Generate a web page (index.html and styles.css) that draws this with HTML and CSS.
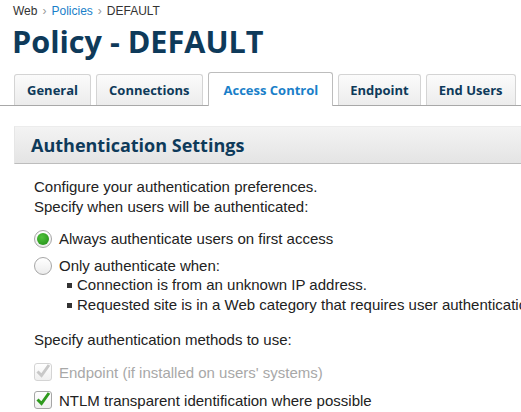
FILE: index.html
```html
<!DOCTYPE html>
<html>
<head>
<meta charset="utf-8">
<link rel="stylesheet" href="styles.css">
</head>
<body>
<div class="crumbs"><span>Web</span><span class="sep">›</span><a class="link">Policies</a><span class="sep">›</span><span>DEFAULT</span></div>
<h1 class="title">Policy - DEFAULT</h1>
<div class="tabs">
  <div class="tab">General</div>
  <div class="tab">Connections</div>
  <div class="tab active">Access Control</div>
  <div class="tab narrow">Endpoint</div>
  <div class="tab">End Users</div>
</div>
<div class="section-head">Authentication Settings</div>
<div class="content">
  <p class="intro">Configure your authentication preferences.<br>Specify when users will be authenticated:</p>
  <div class="opt first"><span class="radio on"></span><span>Always authenticate users on first access</span></div>
  <div class="opt"><span class="radio"></span><span>Only authenticate when:</span></div>
  <ul class="bullets">
    <li>Connection is from an unknown IP address.</li>
    <li>Requested site is in a Web category that requires user authentication.</li>
  </ul>
  <p class="methods">Specify authentication methods to use:</p>
  <div class="opt chk disabled"><span class="check dis"><svg viewBox="0 0 18 18" width="18" height="18"><path d="M3.5 9.5 L7.5 13.5 L15 3" fill="none" stroke="#c8c8c8" stroke-width="3"/></svg></span><span>Endpoint (if installed on users' systems)</span></div>
  <div class="opt chk"><span class="check"><svg viewBox="0 0 18 18" width="18" height="18"><path d="M3.5 9.5 L7.5 13.5 L15 3" fill="none" stroke="#2f9a1e" stroke-width="3"/></svg></span><span>NTLM transparent identification where possible</span></div>
</div>
</body>
</html>
```

FILE: styles.css
```css
html, body { margin: 0; padding: 0; background: #fff; overflow: hidden; }
body { width: 521px; height: 412px; font-family: "Liberation Sans", Arial, sans-serif; color: #222; }
.crumbs { padding: 4px 0 0 13px; font-size: 12px; color: #333; height: 14px; line-height: 14px; display: flex; gap: 5px; }
.crumbs .sep { color: #999; }
.crumbs .link { color: #1a7fc9; }
.title { margin: 5px 0 0 12px; font-family: "Open Sans", sans-serif; font-weight: 700; font-size: 30.6px; line-height: 36px; color: #0e3a5a; }
.tabs { margin-top: 14px; display: flex; gap: 5px; padding-left: 14px; border-bottom: 1px solid #a8a8a8; height: 32px; align-items: flex-end; white-space: nowrap; }
.tab { flex-shrink: 0; font-family: "Open Sans", sans-serif; font-weight: 700; font-size: 13px; color: #0e3a5a; height: 31px; line-height: 30px; padding: 0 12px; border: 1px solid #d4d4d4; border-bottom: none; border-radius: 3px 3px 0 0; background: linear-gradient(#fbfbfb, #ececec); box-sizing: border-box; }
.tab.narrow { padding: 0 11px; }
.tab.active { background: #fff; color: #1a7fc9; height: 34px; margin-bottom: -1px; border-color: #bdbdbd; line-height: 34px; padding: 0 14px 0 15px; }
.section-head { margin: 20px 0 0 14px; height: 38px; line-height: 37px; box-sizing: border-box; padding-left: 16px; background: linear-gradient(#f3f3f3, #e4e4e4); border-top: 1px solid #ececec; border-left: 1px solid #e6e6e6; border-bottom: 1px solid #bdbdbd; font-family: "Open Sans", sans-serif; font-weight: 700; font-size: 18px; color: #0e3a5a; }
.content { padding-left: 34px; font-size: 15px; color: #222; white-space: nowrap; }
.intro { margin: 13px 0 0; line-height: 20px; }
.opt { display: flex; align-items: center; gap: 7px; height: 27px; }
.opt.first { margin-top: 8px; }
.opt.chk { height: 28px; }
.radio { flex-shrink: 0; width: 18px; height: 18px; border-radius: 50%; box-sizing: border-box; border: 1px solid #a6a6a6; background: linear-gradient(#ffffff, #ececec); display: inline-block; position: relative; }
.radio.on::after { content: ""; position: absolute; left: 2px; top: 2px; width: 12px; height: 12px; border-radius: 50%; background: radial-gradient(circle at 40% 35%, #4fc23a, #1f8a16); }
.bullets { list-style: none; margin: -4px 0 0; padding: 0 0 0 33px; }
.bullets li { line-height: 20px; position: relative; padding-left: 10px; }
.bullets li::before { content: ""; position: absolute; left: 0; top: 8px; width: 5px; height: 5px; background: #333; }
.methods { margin: 15px 0 8px; line-height: 20px; }
.check { flex-shrink: 0; width: 18px; height: 18px; box-sizing: border-box; border: 1px solid #a6a6a6; border-radius: 3px; background: linear-gradient(#fff, #efefef); display: inline-block; position: relative; }
.check svg { position: absolute; left: -1px; top: -2px; }
.check.dis { border-color: #d4d4d4; }
.disabled { color: #a8a8a8; }
```
